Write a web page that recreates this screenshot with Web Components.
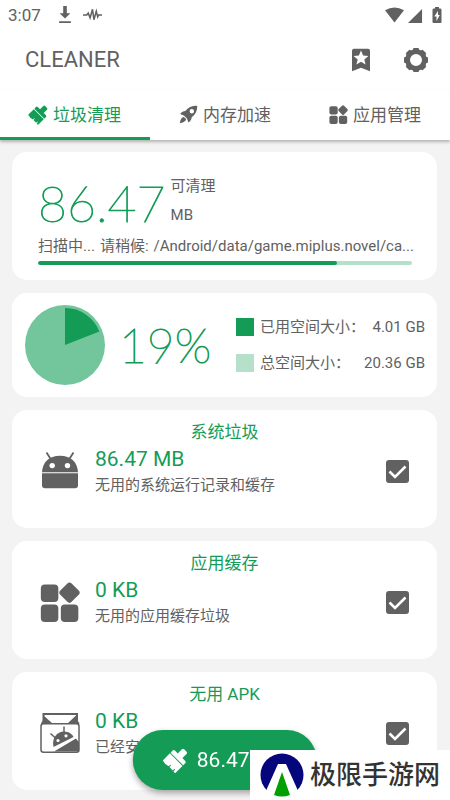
<!DOCTYPE html>
<html lang="zh-CN">
<head>
<meta charset="utf-8">
<meta name="viewport" content="width=device-width, initial-scale=1">
<title>CLEANER</title>
<style>
:root{--green:#149c57;--pale:#b5e1cb;--ink:#616161;--page:#f3f3f3}
html,body{margin:0;min-height:100%;background:var(--page)}
body{font-family:Roboto,"Noto Sans CJK SC",sans-serif;color:var(--ink);font-size:15px;line-height:20px}
</style>
</head>
<body>
<cleaner-app></cleaner-app>
<script>
const define=(name,html,setup)=>{
  const t=document.createElement('template');
  t.innerHTML='<style>*{box-sizing:border-box}:host{display:block}button{font:inherit;color:inherit;background:none;border:0;padding:0;margin:0}</style>'+html;
  customElements.define(name,class extends HTMLElement{
    constructor(){super();this.attachShadow({mode:'open'}).append(t.content.cloneNode(true));}
    connectedCallback(){if(setup&&!this.ready){this.ready=true;setup(this,this.shadowRoot);}}
  });
};

/* Icons: [viewBox, markup] */
const gearTeeth=Array.from({length:8},(_,i)=>`<rect x="9" y="0" width="6" height="5" rx="1.2" transform="rotate(${i*45} 12 12)"/>`).join('');
const icons={
 brush:['0 0 24 24','<g transform="rotate(45 12 12)"><path d="M10.300-1.500h3.400q1.600 0 1.600 1.600V6h4q1.600 0 1.600 1.600v2.900H3.100V7.600Q3.100 6 4.700 6h4V.1q0-1.600 1.600-1.600z"/><path d="M3.100 11.500h17.800v10q-1.300 1-2.600 0v-2.300h-1v2.300h-4.800v-2.300h-1v2.300q-4 1.400-8.400 0z"/></g>'],
 rocket:['0 0 24 24','<path fill-rule="evenodd" d="M23 1c.3 6-2 11-7 14.500-.3 3-1.500 5-4 6.500l-2-5-3.500-3.500-5-2c1.500-2.500 3.500-3.700 6.500-4C11.500 3 17 .7 23 1zM16.200 5.200a2.800 2.800 0 1 0 0 5.600 2.800 2.800 0 0 0 0-5.600z"/><path d="M5.500 15c1.800.5 3 1.700 3.500 3.500C7.500 21 5 22 1 23c.6-4.500 1.800-7 4.500-8z"/>'],
 apps:['0 0 24 24','<rect x=".5" y="1.500" width="10.500" height="10.500" rx="2.400"/><rect x=".5" y="13.500" width="10.500" height="10.500" rx="2.400"/><rect x="12.500" y="13.500" width="10.500" height="10.500" rx="2.400"/><rect x="12.900" y="1.600" width="9.600" height="9.600" rx="1.800" transform="rotate(45 17.700 6.400)"/>'],
 bookmark:['0 0 24 24','<path fill-rule="evenodd" d="M5 .7h14q2 0 2 2v20.500l-9-3.400-9 3.400V2.700q0-2 2-2zM12 2.600l-2.100 5-5.300.4 4.100 3.400-1.300 5.200 4.600-2.800 4.600 2.800-1.300-5.200L19.400 8l-5.300-.4z"/>'],
 gear:['0 0 24 24',gearTeeth+'<path fill-rule="evenodd" d="M12 1.200a10.800 10.800 0 1 0 0 21.600 10.800 10.800 0 0 0 0-21.600zm0 4.800a6 6 0 1 1 0 12 6 6 0 0 1 0-12z"/>'],
 android:['0 0 40 40','<path d="M2 21.300C2.500 11 9 4.700 20 4.700S37.500 11 38 21.300z"/><path d="M2 22.300h36v12q0 3-3 3H5q-3 0-3-3z"/><path d="M6.500 1.500l4.500 7M33.500 1.500l-4.500 7" stroke="currentColor" stroke-width="1.800"/><circle cx="12.200" cy="14.600" r="2.700" fill="#fff"/><circle cx="27.500" cy="14.600" r="2.700" fill="#fff"/>'],
 apk:['0 0 40 40','<g fill="none" stroke="currentColor" stroke-width="1.500"><path d="M3.500 11V1h33.500v10" stroke-width="2"/><rect x="1" y="10.700" width="38" height="28.500" rx="2.500"/><path d="M1.500 10.700L6 5M39 10.700L34.500 5M10.500 20.500l5.500 5M24 13.500v6"/></g><path d="M4 3l8 7H2.500zM36 2.500l-8 7.500h10z"/><path d="M13.500 34C11.500 25 17 18.500 24 18.500c5 0 8.500 3 9.500 5.500z"/><path d="M14 38.500L36 25.500l3 4v9z"/><circle cx="18" cy="27.500" r="1.600" fill="#fff"/><circle cx="26" cy="22.800" r="1.600" fill="#fff"/>'],
 download:['0 0 16 20','<path d="M6 0h4v8h4l-6 6-6-6h4zM1.500 17h13v1.800h-13z"/>'],
 pulse:['0 0 20 16','<path d="M0 8h4l1.500-2 2 5 2.500-9 1.500 11 2.500-9 1.500 6 1-2H20" fill="none" stroke="currentColor" stroke-width="1.600"/>'],
 wifi:['0 0 20 16','<path d="M0 3Q10-3 20 3L10 16z"/>'],
 signal:['0 0 16 16','<path d="M0 16L15 1v15z"/>'],
 battery:['0 0 10 16','<path fill-rule="evenodd" d="M3 0h4v1.500h1.500Q9.500 1.500 9.500 3v12q0 1-1 1h-7q-1 0-1-1V3q0-1.500 1-1.500H3zM6 4L2.300 9.500h2.200V14L7.800 8H6z"/>'],
 logo:['0 0 44 44','<circle cx="22" cy="22" r="21.500" fill="#06067c"/><path d="M18 11h8l13 29-8 4H13l-8-4z" fill="#fff"/><path d="M22 19l8 23q-8 3-16 0z" fill="#00a000"/>']
};
define('ui-icon','<style>:host{flex:none;width:24px;height:24px}svg{display:block;width:100%;height:100%;overflow:visible}</style><svg aria-hidden="true" fill="currentColor"></svg>',(h,r)=>{
  const [box,body]=icons[h.getAttribute('name')],s=r.querySelector('svg');s.setAttribute('viewBox',box);s.innerHTML=body;
});
const makeIcon=name=>{const i=document.createElement('ui-icon');i.setAttribute('name',name);return i;};

define('status-bar',`<style>
:host{display:flex;align-items:center;height:30px;padding:0 8px;font-size:17px;background:#fff}
.grow{flex:1}.dl{width:16px;height:18px;margin-left:16px}.pulse{width:19px;height:16px;margin-left:10px}
.wifi{width:19px;height:16px}.sig{width:15px;height:15px;margin-left:4px}.bat{width:10px;height:16px;margin-left:9px}
</style><span>3:07</span><ui-icon class="dl" name="download"></ui-icon><ui-icon class="pulse" name="pulse"></ui-icon><span class="grow"></span>
<ui-icon class="wifi" name="wifi"></ui-icon><ui-icon class="sig" name="signal"></ui-icon><ui-icon class="bat" name="battery"></ui-icon>`);

define('app-header',`<style>
:host{display:flex;align-items:center;height:60px;padding:0 22px 0 25px;background:#fff}
h1{flex:1;margin:0;font-weight:400;font-size:22px;line-height:28px}
nav{display:flex;gap:31px}
</style><h1>CLEANER</h1><nav><button aria-label="收藏"><ui-icon name="bookmark"></ui-icon></button><button aria-label="设置"><ui-icon name="gear"></ui-icon></button></nav>`);

define('app-tab',`<style>
:host{flex:1;min-width:0}
button{display:flex;width:100%;height:50px;align-items:center;justify-content:center;gap:5px;font-size:17px;line-height:24px;border-bottom:3px solid transparent;padding-top:2px;white-space:nowrap}
:host([selected]) button{color:var(--green);border-color:var(--green)}
ui-icon{width:19px;height:19px}
</style><button role="tab"><slot></slot></button>`,(h,r)=>{
  const b=r.querySelector('button');
  b.setAttribute('aria-selected',h.hasAttribute('selected'));
  b.prepend(makeIcon(h.getAttribute('icon')));
});
define('tab-bar',`<style>:host{display:flex;background:#fff;box-shadow:0 2px 3px #0004;position:relative}</style><slot></slot>`,h=>h.setAttribute('role','tablist'));

define('ui-card',`<style>:host{background:#fff;border-radius:15px}</style><slot></slot>`);

define('scan-card',`<style>
ui-card{height:128px;padding:24px 25px 0 26px}
.top{display:flex;gap:5px;height:60px}
.num{font:200 50px/54px Lato,sans-serif;color:var(--green);-webkit-text-stroke:1px var(--green)}
.unit{display:flex;flex-direction:column;gap:9px}
p{display:flex;margin:0;gap:5px;white-space:nowrap}
.bar{height:4px;border-radius:2px;background:var(--pale);margin-top:5px;overflow:hidden}
.bar i{display:block;width:80%;height:100%;border-radius:2px;background:var(--green)}
</style><ui-card><div class="top"><span class="num">86.47</span><span class="unit"><span>可清理</span><span>MB</span></span></div>
<p><span>扫描中...</span><span>请稍候:</span><span>/Android/data/game.miplus.novel/ca...</span></p>
<div class="bar" role="progressbar" aria-label="扫描进度" aria-valuenow="80" aria-valuemin="0" aria-valuemax="100"><i></i></div></ui-card>`);

define('storage-card',`<style>
ui-card{display:flex;align-items:center;height:104px;padding:0 12px 0 13px}
svg{flex:none;width:80px;height:80px}
.pct{flex:1;padding-left:14px;font:200 48px/54px Lato,sans-serif;color:var(--green);-webkit-text-stroke:1px var(--green)}
dl{display:grid;gap:16px;margin:0;width:189px}
dl div{display:flex;align-items:center;white-space:nowrap}
i{width:18px;height:18px;margin-right:6px;background:var(--green)}i.all{background:var(--pale)}
dd{margin:0 0 0 auto}
</style><ui-card><svg viewBox="0 0 80 80" role="img" aria-label="19%"><circle cx="40" cy="40" r="40" fill="#73c69c"/><path d="M40 40V3A37 37 0 0 1 74.400 26.400z" fill="#149c57"/></svg>
<span class="pct">19%</span><dl><div><i></i><dt>已用空间大小：</dt><dd>4.01 GB</dd></div><div><i class="all"></i><dt>总空间大小：</dt><dd>20.36 GB</dd></div></dl></ui-card>`);

define('check-box',`<style>
label{display:grid;width:23px;height:23px}
input,svg{grid-area:1/1;width:23px;height:23px;margin:0}
input{appearance:none;border:2px solid var(--ink);border-radius:3px}
input:checked{background:var(--ink)}
svg{pointer-events:none;fill:none;stroke:#fff;stroke-width:2.600}
input:not(:checked)+svg{visibility:hidden}
</style><label><input type="checkbox" checked><svg viewBox="0 0 23 23" aria-hidden="true"><path d="M3.500 11.500l5.500 5.500L19.500 6.500"/></svg></label>`,(h,r)=>r.querySelector('input').setAttribute('aria-label',h.getAttribute('label')||'选择'));

define('junk-card',`<style>
ui-card{height:118px;padding:10px 28px 0}
h2{margin:0;text-align:center;color:var(--green);font-size:17px;line-height:24px;font-weight:400}
.row{display:flex;align-items:center;gap:15px;height:54px}
ui-icon{width:40px;height:40px}
.text{flex:1;min-width:0}
.size{color:var(--green);font-size:21px;line-height:28px}
p{margin:0;line-height:24px;white-space:nowrap}
</style><ui-card><h2><slot name="title"></slot></h2><div class="row"><div class="text"><div class="size"><slot name="size"></slot></div><p><slot></slot></p></div></div></ui-card>`,(h,r)=>{
  const row=r.querySelector('.row'),box=document.createElement('check-box');
  box.setAttribute('label',h.getAttribute('label'));
  row.prepend(makeIcon(h.getAttribute('icon')));
  row.append(box);
});

define('clean-button',`<style>
:host{position:fixed;left:50%;bottom:10px;transform:translateX(-50%)}
button{display:flex;align-items:center;gap:9px;height:60px;padding:0 31px;border-radius:30px;background:var(--green);color:#fff;font-size:21px;line-height:28px;white-space:nowrap;box-shadow:0 3px 6px #0005}
</style><button><ui-icon name="brush"></ui-icon><slot></slot></button>`);

define('site-mark',`<style>
:host{position:fixed;right:0;bottom:0;display:flex;align-items:center;gap:6px;height:50px;padding:0 10px;background:#fff;color:#333;font:500 26px/40px "Noto Sans CJK SC",sans-serif}
ui-icon{width:44px;height:44px}
span{padding-bottom:4px}
</style><ui-icon name="logo"></ui-icon><span>极限手游网</span>`);

define('cleaner-app',`<style>main{display:flex;flex-direction:column;gap:13px;padding:12px 13px 0 12px}</style>
<status-bar></status-bar><app-header></app-header>
<tab-bar><app-tab icon="brush" selected>垃圾清理</app-tab><app-tab icon="rocket">内存加速</app-tab><app-tab icon="apps">应用管理</app-tab></tab-bar>
<main><scan-card></scan-card><storage-card></storage-card>
<junk-card icon="android" label="系统垃圾"><span slot="title">系统垃圾</span><span slot="size">86.47 MB</span>无用的系统运行记录和缓存</junk-card>
<junk-card icon="apps" label="应用缓存"><span slot="title">应用缓存</span><span slot="size">0 KB</span>无用的应用缓存垃圾</junk-card>
<junk-card icon="apk" label="无用 APK"><span slot="title">无用 APK</span><span slot="size">0 KB</span>已经安装的</junk-card></main>
<clean-button>86.47 MB</clean-button><site-mark></site-mark>`);
</script>
</body>
</html>
